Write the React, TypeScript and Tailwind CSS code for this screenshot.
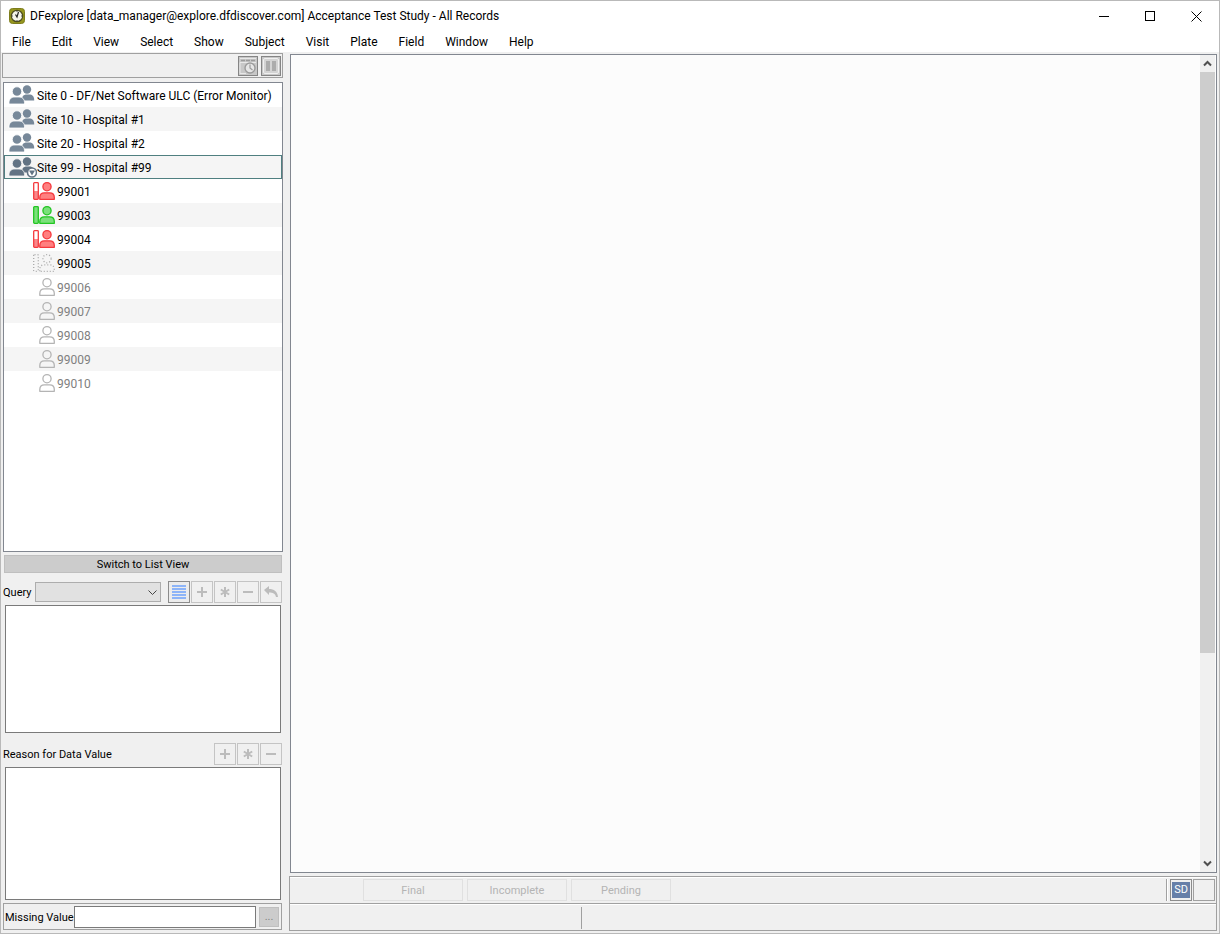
import type { ReactNode } from 'react';

type SubjectState = 'error' | 'clean' | 'empty' | 'new';

interface Site {
  name: string;
  open?: boolean;
}

interface Subject {
  id: string;
  state: SubjectState;
}

const menus = ['File', 'Edit', 'View', 'Select', 'Show', 'Subject', 'Visit', 'Plate', 'Field', 'Window', 'Help'];

const sites: Site[] = [
  { name: 'Site 0 - DF/Net Software ULC (Error Monitor)' },
  { name: 'Site 10 - Hospital #1' },
  { name: 'Site 20 - Hospital #2' },
  { name: 'Site 99 - Hospital #99', open: true },
];

const subjects: Subject[] = [
  { id: '99001', state: 'error' },
  { id: '99003', state: 'clean' },
  { id: '99004', state: 'error' },
  { id: '99005', state: 'empty' },
  { id: '99006', state: 'new' },
  { id: '99007', state: 'new' },
  { id: '99008', state: 'new' },
  { id: '99009', state: 'new' },
  { id: '99010', state: 'new' },
];

function AppIcon() {
  return (
    <svg width="16" height="16" viewBox="0 0 16 16">
      <rect x="0.5" y="0.5" width="15" height="15" rx="3" fill="#96961f" stroke="#7d7d1c" />
      <circle cx="8" cy="8" r="5.7" fill="#f4f4ea" stroke="#4c4c20" strokeWidth="1.2" />
      <path d="M9.5 4 L8 9 L6.5 6.5" fill="none" stroke="#222" strokeWidth="1.2" />
      <path d="M8 3v1M8 12v1M3 8h1M12 8h1" stroke="#555" />
    </svg>
  );
}

function SiteIcon({ open }: { open?: boolean }) {
  const fill = open ? '#627384' : '#778899';
  return (
    <svg width="29" height="22" viewBox="0 0 29 22" className="shrink-0">
      <g fill={fill}>
        <circle cx="19" cy="5.500" r="4.200" />
        <path d="M14 16.500c0-4 1-6 5-6h2c3.500 0 5.200 2 5.200 5.500v.5z" />
      </g>
      <g fill={fill} stroke={open ? '#f4f4f4' : '#fff'} strokeWidth="0.8">
        <circle cx="9" cy="7.500" r="4.700" />
        <path d="M1 20v-1.500c0-3.500 2.500-5.500 6-5.500h4c3.500 0 5.500 2 5.500 5.500V20z" />
      </g>
      {open && (
        <>
          <circle cx="24" cy="16.500" r="4.500" fill="#fff" stroke="#627384" strokeWidth="1.600" />
          <path d="M21 14.500h6L24 19.500z" fill="#627384" />
        </>
      )}
    </svg>
  );
}

const subjectColors = {
  error: { line: '#f5393d', fill: '#ff8080' },
  clean: { line: '#22c522', fill: '#7be07b' },
  empty: { line: '#a8a8a8', fill: 'none' },
  new: { line: '#b4b4b4', fill: 'none' },
};

function SubjectIcon({ state }: { state: SubjectState }) {
  const { line, fill } = subjectColors[state];
  const dashes = state === 'empty' ? '1 2' : undefined;
  return (
    <svg width="22" height="20" viewBox="0 0 22 20" className="shrink-0" fill="none" stroke={line} strokeWidth="1.300" strokeDasharray={dashes}>
      {state !== 'new' && <rect x="0.700" y="1.700" width="4.600" height="16.600" rx="0.800" fill={state === 'clean' ? fill : 'none'} />}
      {state === 'error' && <rect x="1" y="10" width="4" height="8" fill={line} fillOpacity="0.6" stroke="none" />}
      <circle cx="14" cy="5.700" r="4.100" fill={fill} />
      <path d="M6.800 18.300V16.500c0-3 1.700-4.700 4.500-4.700h5.400c2.800 0 4.600 1.700 4.600 4.700v1.800z" fill={fill} strokeLinejoin="round" />
    </svg>
  );
}

function CalendarClockIcon() {
  return (
    <svg width="20" height="20" viewBox="0 0 20 20" fill="none" stroke="#9b9b9b">
      <rect x="0.500" y="0.500" width="19" height="19" fill="#c8c8c8" stroke="#858585" />
      <path d="M2 2.500h16M2 17.500V6.500h16M2 17.500h6" stroke="#e8e8e8" />
      <path d="M3 4.500h14" strokeWidth="1.500" strokeDasharray="4 1" />
      <circle cx="12" cy="12" r="5" fill="#e6e6e6" strokeWidth="1.400" />
      <path d="M12 8.500V12l2.500 2" strokeWidth="1.200" />
    </svg>
  );
}

function ColumnsIcon() {
  return (
    <svg width="20" height="20" viewBox="0 0 20 20">
      <rect x="0.500" y="0.500" width="19" height="19" fill="#c8c8c8" stroke="#858585" />
      <rect x="2.500" y="2.500" width="15" height="15" rx="1.500" fill="#d4d4d4" stroke="#f0f0f0" />
      <path d="M5 5h4v10H5zM11 5h4v10h-4z" fill="#acacac" />
    </svg>
  );
}

const toolIcons: Record<string, ReactNode> = {
  List: <path d="M3 4h14M3 7h14M3 10h14M3 13h14M3 16h14" stroke="#8db4f8" strokeWidth="2" />,
  Add: <path d="M10 5v10M5 10h10" stroke="#bcbcbc" strokeWidth="2" />,
  Modify: <path d="M10 5v10M5.800 7.500l8.400 5M14.200 7.500l-8.400 5" stroke="#bcbcbc" strokeWidth="2" />,
  Delete: <path d="M5 10h10" stroke="#bcbcbc" strokeWidth="2" />,
  Undo: <path d="M3 8l5-4v3c5 0 8.500 2.500 9 8h-2c-.8-3.500-3-4.500-7-4.500V13z" fill="#bcbcbc" />,
};

function ToolButton({ name, active }: { name: string; active?: boolean }) {
  return (
    <button
      type="button"
      aria-label={name}
      disabled={!active}
      className={`flex size-[22px] items-center justify-center border ${active ? 'border-[#8c8c8c] bg-[#ececec]' : 'border-[#c4c4c4]'}`}
    >
      <svg width="20" height="20" viewBox="0 0 20 20" fill="none" className="shrink-0">
        {toolIcons[name]}
      </svg>
    </button>
  );
}

function TitleBar() {
  return (
    <header className="flex h-[30px] items-center bg-white pl-2">
      <AppIcon />
      <h1 className="ml-[5px] flex-1 text-[12px]">
        DFexplore [data_manager@explore.dfdiscover.com] Acceptance Test Study - All Records
      </h1>
      <button type="button" aria-label="Minimize" className="flex h-full w-[46px] items-center justify-center">
        <svg width="10" height="10" stroke="#000"><path d="M0 5.500h10" /></svg>
      </button>
      <button type="button" aria-label="Maximize" className="flex h-full w-[46px] items-center justify-center">
        <svg width="10" height="10" fill="none" stroke="#000"><rect x="0.500" y="0.500" width="9" height="9" /></svg>
      </button>
      <button type="button" aria-label="Close" className="flex h-full w-[46px] items-center justify-center">
        <svg width="11" height="11" stroke="#000"><path d="M0.500 0.500l10 10M10.500 0.500l-10 10" /></svg>
      </button>
    </header>
  );
}

function RecordTree() {
  return (
    <ul className="min-h-[312px] flex-1 border border-[#828790] bg-white text-[12px]">
      {sites.map((site) => (
        <li key={site.name} className="even:bg-[#f5f5f5]">
          <button
            type="button"
            className={`flex h-6 w-full items-center border pl-[3px] text-left whitespace-nowrap ${site.open ? 'border-[#4f7f80]' : 'border-transparent'}`}
          >
            <SiteIcon open={site.open} />
            <span className="pt-px">{site.name}</span>
          </button>
        </li>
      ))}
      {subjects.map(({ id, state }) => (
        <li key={id} className="even:bg-[#f5f5f5]">
          <button type="button" className={`flex h-6 w-full items-center gap-[2px] pl-[29px] ${state === 'new' ? 'text-[#808080]' : ''}`}>
            <SubjectIcon state={state} />
            <span className="pt-px">{id}</span>
          </button>
        </li>
      ))}
    </ul>
  );
}

function Sidebar() {
  return (
    <aside className="flex w-[283px] shrink-0 flex-col pt-px pr-px pl-px">
      <div className="flex h-[25px] items-center justify-end gap-[3px] border border-[#a0a0a0] pr-px">
        <button type="button" aria-label="Recent records"><CalendarClockIcon /></button>
        <button type="button" aria-label="Columns"><ColumnsIcon /></button>
      </div>

      <div className="mt-1 flex flex-1 flex-col pl-px">
        <RecordTree />
        <button type="button" className="mx-px mt-[3px] h-[18px] border border-[#bfbfbf] bg-[#cccccc] pt-px text-[11px] leading-[16px]">
          Switch to List View
        </button>
      </div>

      <div className="text-[11px]">
        <div className="mt-2 mb-0.5 flex h-[22px] items-center pl-px">
          <label htmlFor="query" className="w-8 pt-[3px]">Query</label>
          <div className="relative">
            <select id="query" className="block h-5 w-[126px] appearance-none border border-[#adadad] bg-[#e1e1e1]" />
            <svg width="9" height="6" className="pointer-events-none absolute top-2 right-1" fill="none" stroke="#444">
              <path d="M0.500 0.500l4 4 4-4" />
            </svg>
          </div>
          <div className="ml-[7px] flex gap-px">
            <ToolButton name="List" active />
            <ToolButton name="Add" />
            <ToolButton name="Modify" />
            <ToolButton name="Delete" />
            <ToolButton name="Undo" />
          </div>
        </div>
        <div className="pr-0.5 pl-[3px]">
          <textarea aria-label="Query text" className="block h-32 w-full resize-none border border-[#7a7a7a] bg-white" />
        </div>

        <div className="mt-[10px] mb-0.5 flex h-[22px] items-center justify-between px-px">
          <label htmlFor="reason" className="pt-[3px]">Reason for Data Value</label>
          <div className="flex gap-px">
            <ToolButton name="Add" />
            <ToolButton name="Modify" />
            <ToolButton name="Delete" />
          </div>
        </div>
        <div className="pr-0.5 pl-[3px]">
          <textarea id="reason" className="block h-[133px] w-full resize-none border border-[#7a7a7a] bg-white" />
        </div>

        <div className="mt-[3px] mr-px mb-[3px] ml-px flex h-[27px] items-center border border-[#a0a0a0] pr-0.5 pl-px">
          <label htmlFor="missing" className="w-[69px] pt-[3px] whitespace-nowrap">Missing Value</label>
          <input id="missing" type="text" className="h-[22px] min-w-0 flex-1 border border-[#7a7a7a] bg-white px-1" />
          <button type="button" aria-label="Choose missing value" disabled className="ml-[3px] h-5 w-5 border border-[#bfbfbf] bg-[#cccccc] leading-[16px] text-[#838383]">
            ...
          </button>
        </div>
      </div>
    </aside>
  );
}

function ScrollBar() {
  return (
    <div className="flex w-[15px] flex-col bg-[#f0f0f0]">
      <button type="button" aria-label="Scroll up" className="flex h-[17px] items-center justify-center">
        <svg width="9" height="7" fill="none" stroke="#505050" strokeWidth="2"><path d="M1 5.500l3.500-3.500L8 5.500" /></svg>
      </button>
      <div className="flex flex-1 flex-col">
        <div className="h-0 grow-[742] bg-[#cdcdcd]" />
        <div className="h-0 grow-[258]" />
      </div>
      <button type="button" aria-label="Scroll down" className="flex h-[17px] items-center justify-center">
        <svg width="9" height="7" fill="none" stroke="#505050" strokeWidth="2"><path d="M1 1.500L4.500 5 8 1.500" /></svg>
      </button>
    </div>
  );
}

function StatusPanel() {
  return (
    <footer className="mt-[3px] mb-[2px] h-[55px] border border-[#a0a0a0] text-[11px]">
      <div className="flex h-[27px] items-start border-t border-b border-t-white border-b-[#a0a0a0] pt-px pl-[73px]">
        <div className="flex flex-1 gap-1 text-[#b4b4b4]">
          {['Final', 'Incomplete', 'Pending'].map((label) => (
            <button key={label} type="button" disabled className="h-[22px] w-[100px] border border-[#e0e0e0] pt-[3px]">
              {label}
            </button>
          ))}
        </div>
        <div className="mr-0.5 h-[22px] w-0.5 border-l border-[#a0a0a0] bg-white" />
        <div className="flex size-[22px] items-center justify-center border border-[#8c8c8c]">
          <span className="flex h-[16px] w-[18px] items-center justify-center bg-[#667fa8] text-[11px] text-white">SD</span>
        </div>
        <div className="mr-px ml-px size-[22px] border border-[#a0a0a0]" />
      </div>
      <div className="flex h-[26px] items-center border-t border-white">
        <div className="h-[22px] w-[291px]" />
        <div className="h-[22px] flex-1 border-l border-[#a0a0a0]" />
      </div>
    </footer>
  );
}

export default function App() {
  return (
    <div className="flex min-h-screen flex-col border border-[#b9b9b9] bg-[#f0f0f0] font-[Roboto,'Noto_Sans',sans-serif] text-black">
      <TitleBar />
      <nav className="flex h-[21px] items-center bg-white text-[12px]">
        {menus.map((menu) => (
          <button key={menu} type="button" className="pr-[10px] pl-[11px]">{menu}</button>
        ))}
      </nav>
      <div className="flex flex-1">
        <Sidebar />
        <main className="ml-[5px] flex min-w-0 flex-1 flex-col pt-[2px] pr-0.5">
          <div className="ml-px flex flex-1 justify-end border border-[#828790] bg-[#fcfcfc] pr-px">
            <ScrollBar />
          </div>
          <StatusPanel />
        </main>
      </div>
    </div>
  );
}
